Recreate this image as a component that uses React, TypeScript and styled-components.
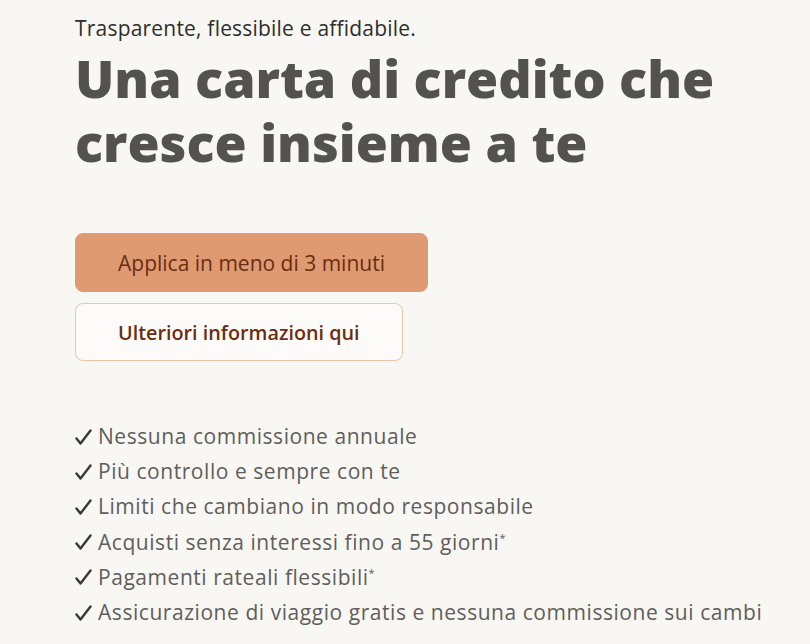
import * as React from "react";
import styled, { createGlobalStyle } from "styled-components";

const GlobalStyle = createGlobalStyle`
  html, body {
    margin: 0;
    padding: 0;
    background: #f8f7f3;
  }
  * {
    box-sizing: border-box;
  }
`;

const SPage = styled.div`
  min-height: 100vh;
  padding: 14px 0 0 75px;
  font-family: "Open Sans", "Liberation Sans", sans-serif;
  background: #f8f7f3;
`;
const STagline = styled.p`
  margin: 0;
  font-size: 21px;
  line-height: 28px;
  letter-spacing: 0.2px;
  color: #2f2e2c;
`;
const STitle = styled.h1`
  margin: 4px 0 0;
  font-size: 52px;
  line-height: 64px;
  font-weight: 800;
  color: #53524f;
`;
const SActions = styled.div`
  display: flex;
  flex-direction: column;
  align-items: flex-start;
  gap: 11px;
  margin-top: 59px;
`;
const SButton = styled.button<{ primary?: boolean }>`
  height: ${(p) => (p.primary ? "59px" : "58px")};
  padding: 0 42px;
  border-radius: 8px;
  border: 1px solid ${(p) => (p.primary ? "#df9a71" : "#e8c6ac")};
  background: ${(p) => (p.primary ? "#df9a71" : "#fcfbf9")};
  color: #6a2d12;
  font-family: inherit;
  font-size: ${(p) => (p.primary ? "21px" : "19.8px")};
  font-weight: ${(p) => (p.primary ? 500 : 600)};
  cursor: pointer;
`;
const SList = styled.ul`
  list-style: none;
  margin: 58px 0 0;
  padding: 0;
`;
const SItem = styled.li`
  display: flex;
  align-items: center;
  font-size: 21px;
  line-height: 35.2px;
  letter-spacing: 0.55px;
  color: #5f5e5b;
`;
const SCheck = styled.svg`
  width: 17px;
  height: 16px;
  margin-right: 6px;
  flex: none;
`;
const SNote = styled.sup`
  font-size: 11px;
  line-height: 0;
  vertical-align: 8px;
`;

const Check = () => (
  <SCheck viewBox="0 0 17 16">
    <path
      d="M1.5 9.5 L5.5 14.5 L15.5 1.5"
      fill="none"
      stroke="#393937"
      strokeWidth="2.4"
      strokeLinecap="round"
      strokeLinejoin="round"
    />
  </SCheck>
);

const features = [
  { text: "Nessuna commissione annuale" },
  { text: "Più controllo e sempre con te" },
  { text: "Limiti che cambiano in modo responsabile" },
  { text: "Acquisti senza interessi fino a 55 giorni", note: true },
  { text: "Pagamenti rateali flessibili", note: true },
  { text: "Assicurazione di viaggio gratis e nessuna commissione sui cambi" }
];

const App = () => {
  return (
    <SPage>
      <GlobalStyle />
      <STagline>Trasparente, flessibile e affidabile.</STagline>
      <STitle>
        Una carta di credito che
        <br />
        cresce insieme a te
      </STitle>
      <SActions>
        <SButton primary>Applica in meno di 3 minuti</SButton>
        <SButton>Ulteriori informazioni qui</SButton>
      </SActions>
      <SList>
        {features.map((f) => (
          <SItem key={f.text}>
            <Check />
            <span>
              {f.text}
              {f.note && <SNote>*</SNote>}
            </span>
          </SItem>
        ))}
      </SList>
    </SPage>
  );
};

export default App;
